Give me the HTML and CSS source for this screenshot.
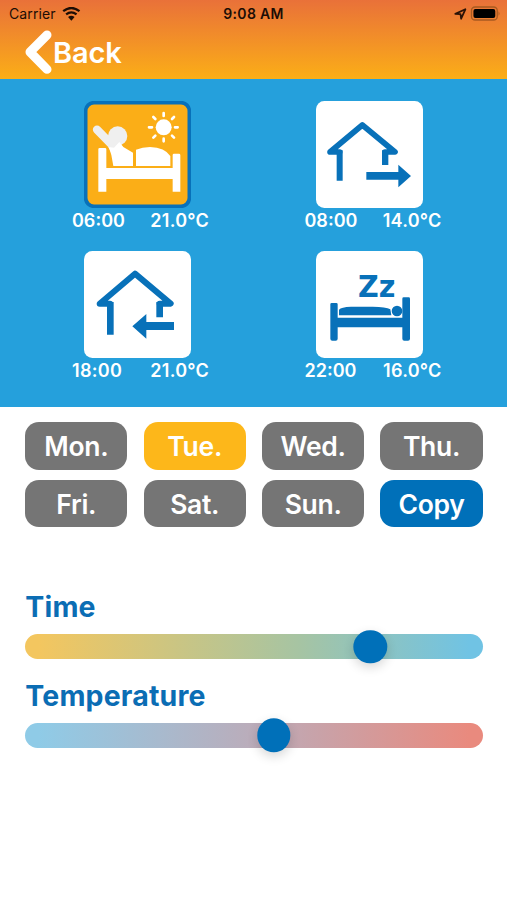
FILE: index.html
```html
<!DOCTYPE html>
<html lang="en">
<head>
<meta charset="utf-8">
<title>Schedule</title>
<link rel="stylesheet" href="styles.css">
</head>
<body>
<header class="header">
  <div class="status">
    <div class="status-left">
      <span class="carrier">Carrier</span>
      <svg class="wifi" viewBox="185 17 57 43"><path d="M188 30Q213 10 238 30M197 40Q213 27 229 40" fill="none" stroke="#1c0d05" stroke-width="7"/><path d="M203 48Q213 40 223 48L213 59Z" fill="#1c0d05"/></svg>
    </div>
    <span class="clock">9:08 AM</span>
    <div class="status-right">
      <svg class="locate" viewBox="610 21 40 37"><path d="M614 39L645 25L632 54L630 40Z" fill="none" stroke="#2a1307" stroke-width="5.5" stroke-linejoin="round"/></svg>
      <svg class="battery" viewBox="660 16 92 46"><rect x="663" y="19" width="79" height="40" rx="11" fill="none" stroke="#a85a20" stroke-width="4"/><rect x="669" y="25" width="67" height="28" rx="6" fill="#000"/><path d="M746 32Q752 39 746 46Z" fill="#a85a20"/></svg>
    </div>
  </div>
  <nav class="back">
    <svg class="chevron" viewBox="74 91 81 132"><path d="M140 106L89 157L140 209" fill="none" stroke="#fff" stroke-width="27" stroke-linecap="round" stroke-linejoin="round"/></svg>
    <span class="back-label">Back</span>
  </nav>
</header>

<section class="scenes">
  <article class="scene">
    <svg class="tile" viewBox="72 28 321 321">
      <rect x="77" y="33" width="311" height="311" rx="25" fill="#fbae17" stroke="#0871b9" stroke-width="11"/>
      <path d="M111 114L158 162" stroke="#efefef" stroke-width="25" stroke-linecap="round"/>
      <circle cx="173" cy="133" r="29" fill="#efefef"/>
      <path d="M138 146L180 146L183 158L164 186L154 184Z" fill="#efefef"/>
      <path d="M178 151L190 166L219 183V223H160L154 190Q150 176 145 166L162 168Z" fill="#fff"/>
      <path d="M228 223V174Q247 166 270 166Q315 168 331 193V223Z" fill="#fff"/>
      <path d="M119 169H135Q139 169 139 173V229H338V190Q338 186 342 186H357Q361 186 361 190V300H338V262H139V300H115V173Q115 169 119 169Z" fill="#fff"/>
      <circle cx="311" cy="107" r="24" fill="#fff"/>
      <path d="M311 64V73M311 141V149M267 107H276M345 107H353M280 76L286 82M336 132L342 138M342 76L336 82M286 132L280 138" stroke="#fff" stroke-width="8" stroke-linecap="round"/>
    </svg>
    <p class="reading"><span class="time">06:00</span><span class="temp">21.0°C</span></p>
  </article>
  <article class="scene">
    <svg class="tile" viewBox="79 28 321 321">
      <rect x="79" y="28" width="321" height="321" rx="25" fill="#fff"/>
      <path d="M150 181H121L218 100L316 181H286" fill="none" stroke="#0871b9" stroke-width="17" stroke-linecap="round" stroke-linejoin="round"/>
      <path d="M141 176H159V267H141ZM277 176H296V220H277ZM230 241H326V219L364 253L326 287V264H230Z" fill="#0871b9"/>
    </svg>
    <p class="reading"><span class="time">08:00</span><span class="temp">14.0°C</span></p>
  </article>
  <article class="scene">
    <svg class="tile" viewBox="72 28 321 321">
      <rect x="72" y="28" width="321" height="321" rx="25" fill="#fff"/>
      <path d="M150 186H119L225 96L332 186H299" fill="none" stroke="#0871b9" stroke-width="18" stroke-linecap="round" stroke-linejoin="round"/>
      <path d="M141 181H161V279H141ZM289 181H309V227H289ZM342 241H259V217L217 254L259 291V265H342Z" fill="#0871b9"/>
    </svg>
    <p class="reading"><span class="time time-narrow">18:00</span><span class="temp">21.0°C</span></p>
  </article>
  <article class="scene">
    <svg class="tile" viewBox="80 28 321 321">
      <rect x="80" y="28" width="321" height="321" rx="25" fill="#fff"/>
      <text class="snore" x="206" y="165" textLength="112" lengthAdjust="spacingAndGlyphs">Zz</text>
      <path d="M127 184H141Q145 184 145 188V228H339V171Q339 167 343 167H358Q362 167 362 171V291Q362 297 356 297H345Q339 297 339 291V257H145V291Q145 297 139 297H129Q123 297 123 291V188Q123 184 127 184Z" fill="#0871b9"/>
      <path d="M149 221V204Q155 196 185 195H250Q290 195 303 203L306 221Z" fill="#0871b9"/>
      <circle cx="323" cy="208" r="16" fill="#0871b9"/>
    </svg>
    <p class="reading"><span class="time">22:00</span><span class="temp">16.0°C</span></p>
  </article>
</section>

<main class="controls">
  <div class="days">
    <button class="day">Mon.</button>
    <button class="day day-active">Tue.</button>
    <button class="day">Wed.</button>
    <button class="day">Thu.</button>
    <button class="day">Fri.</button>
    <button class="day">Sat.</button>
    <button class="day">Sun.</button>
    <button class="day day-copy">Copy</button>
  </div>
  <div class="slider">
    <h2 class="slider-label">Time</h2>
    <div class="track track-time"><span class="thumb" style="left:75.5%"></span></div>
  </div>
  <div class="slider">
    <h2 class="slider-label">Temperature</h2>
    <div class="track track-temp"><span class="thumb" style="left:54.4%"></span></div>
  </div>
</main>
</body>
</html>
```
FILE: styles.css
```css
* { box-sizing: border-box; }

body {
  margin: 0;
  height: 900px;
  background: #fff;
  font-family: Inter, "Liberation Sans", sans-serif;
  overflow: hidden;
}

svg { display: block; }

.header {
  height: 79px;
  background: linear-gradient(#e97139, #fbae17);
}

.status {
  display: grid;
  grid-template-columns: 1fr auto 1fr;
  align-items: center;
  height: 27px;
  padding: 0 6px 0 9px;
  color: #1c0d05;
  font-size: 14px;
}

.status-left { display: flex; align-items: center; gap: 6px; }
.status-right { display: flex; align-items: center; justify-content: flex-end; gap: 3px; }
.carrier { letter-spacing: 0.1px; }
.clock { margin-left: -3px; font-weight: 600; letter-spacing: 0.3px; }
.wifi { width: 19px; height: 14px; }
.locate { width: 13px; height: 12px; }
.battery { width: 31px; height: 15px; }

.back {
  display: flex;
  align-items: center;
  height: 50px;
  padding-left: 24.7px;
  color: #fff;
}

.chevron { width: 27px; height: 44px; }

.back-label {
  margin: 1px 0 0 1.3px;
  font-size: 29px;
  font-weight: 600;
  letter-spacing: -0.15px;
}

.scenes {
  display: grid;
  grid-template-columns: 232.5px 1fr;
  grid-template-rows: 150px 150px;
  height: 328px;
  padding: 22.3px 0 0 72px;
  background: #25a0dc;
}

.scene { width: 137px; }
.tile { width: 107px; height: 107px; margin-left: 11.9px; }

.snore {
  fill: #0871b9;
  font: bold 90px "DejaVu Sans", sans-serif;
}

.reading {
  display: flex;
  justify-content: space-between;
  margin: 2px 0 0;
  color: #fff;
  font-size: 18px;
  font-weight: 600;
  line-height: 22px;
}

.temp { letter-spacing: 0.25px; }
.time-narrow { letter-spacing: 0.3px; }

.controls { padding: 15.2px 24.5px 0 25.3px; }

.days {
  display: grid;
  grid-template-columns: repeat(4, 1fr);
  grid-auto-rows: 47.6px;
  gap: 9.8px 16.4px;
  margin-bottom: 61px;
}

.day {
  padding: 2px 0 0;
  border: 0;
  border-radius: 14px;
  background: #757575;
  color: #fff;
  font: 600 26.5px/45.6px Inter, "Liberation Sans", sans-serif;
  letter-spacing: -0.3px;
}

.day-active { background: #fdb71a; }
.day-copy { background: #0070b9; }

.slider { height: 88.7px; }

.slider-label {
  margin: 0 0 9px;
  color: #0b6db4;
  font-size: 28.5px;
  font-weight: 700;
  letter-spacing: 0.17px;
  line-height: 37px;
}

.track {
  position: relative;
  height: 25px;
  border-radius: 13px;
}

.track-time { background: linear-gradient(90deg, #f3c65f 3%, #a6c4a3 60%, #70c3e4 97%); }
.track-temp { background: linear-gradient(90deg, #8fcbe7 3%, #bdabb8 52%, #e98a7e 97%); }

.thumb {
  position: absolute;
  top: 50%;
  width: 33.4px;
  height: 33.4px;
  border-radius: 50%;
  background: #0070b9;
  box-shadow: 0 4px 11px rgba(0, 0, 0, 0.16);
  transform: translate(-50%, -50%);
}
```
